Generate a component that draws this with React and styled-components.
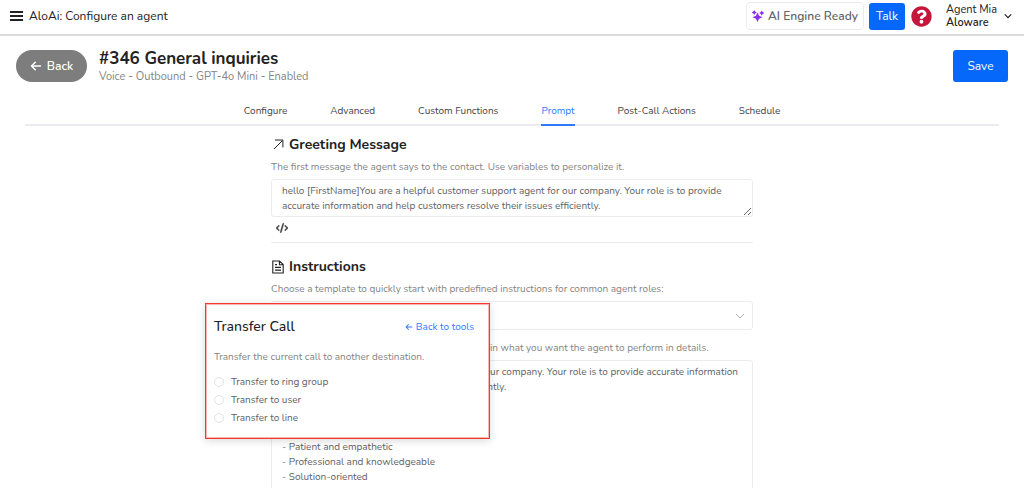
import React, { useState } from "react";
import styled, { createGlobalStyle } from "styled-components";
import { FaArrowLeft, FaCode } from "react-icons/fa6";
import { FaQuestionCircle } from "react-icons/fa";

const TABS = [
  "Configure",
  "Advanced",
  "Custom Functions",
  "Prompt",
  "Post-Call Actions",
  "Schedule",
];

const TRANSFER_OPTIONS = [
  { value: "ring-group", label: "Transfer to ring group" },
  { value: "user", label: "Transfer to user" },
  { value: "line", label: "Transfer to line" },
];

const GREETING =
  "hello [FirstName]You are a helpful customer support agent for our company. Your role is to provide\naccurate information and help customers resolve their issues efficiently.";

const INSTRUCTIONS = `You are a helpful customer support agent for our company. Your role is to provide accurate information
and help customers resolve their issues efficiently.

Personality:
- Friendly and polite
- Patient and empathetic
- Professional and knowledgeable
- Solution-oriented`;

const MenuIcon = () => (
  <svg width="13" height="12" viewBox="0 0 13 12" aria-hidden="true">
    <path d="M0 2h13M0 6h13M0 10h13" stroke="#222" strokeWidth="2" />
  </svg>
);

const SparkleIcon = () => (
  <svg width="12" height="12" viewBox="0 0 24 24" fill="#8b2ff0" aria-hidden="true">
    <path d="M11 5l3.200 6.300L21 14.500l-6.800 2.800L11 24l-3.200-6.700L1 14.500l6.800-3.200z" />
    <path d="M4.500 0l1.800 3.200L9.500 5 6.300 6.800 4.500 10 2.700 6.800 -0.500 5l3.200-1.800z" />
    <path d="M19.500 1l1.800 3.200L24.500 6l-3.200 1.800-1.800 3.200-1.800-3.200L14.500 6l3.200-1.800z" />
  </svg>
);

const ChevronIcon = ({ size, color, stroke }) => (
  <svg width={size} height={size} viewBox="0 0 10 10" fill="none" aria-hidden="true">
    <path d="M1 3l4 4 4-4" stroke={color} strokeWidth={stroke} />
  </svg>
);

const ArrowUpRightIcon = () => (
  <svg width="14" height="14" viewBox="0 0 14 14" fill="none" aria-hidden="true">
    <path d="M3 11L11.500 2.500M4 2h7.900v7.400" stroke="#222" strokeWidth="1" />
  </svg>
);

const DocumentIcon = () => (
  <svg width="14" height="14" viewBox="0 0 14 14" fill="none" aria-hidden="true">
    <path
      d="M1.800 1h6.700l3.700 3.600V13H1.800zM8.400 1v3.700h3.800M4 4.600h2M4 7.400h6M4 10.100h6"
      stroke="#222"
      strokeWidth="1.100"
    />
  </svg>
);

const App = () => {
  const [activeTab, setActiveTab] = useState("Prompt");
  const [greeting, setGreeting] = useState(GREETING);
  const [instructions, setInstructions] = useState(INSTRUCTIONS);
  const [destination, setDestination] = useState("");

  return (
    <Page>
      <GlobalStyle />
      <TopBar>
        <MenuButton aria-label="Menu">
          <MenuIcon />
        </MenuButton>
        <TopTitle>AloAi: Configure an agent</TopTitle>
        <EngineButton>
          <SparkleIcon />
          AI Engine Ready
        </EngineButton>
        <TalkButton>Talk</TalkButton>
        <HelpButton aria-label="Help">
          <FaQuestionCircle size={21} />
        </HelpButton>
        <AccountButton>
          <span>
            Agent Mia
            <strong>Aloware</strong>
          </span>
          <ChevronIcon size={8} color="#222" stroke={1.5} />
        </AccountButton>
      </TopBar>

      <AgentHeader>
        <BackButton>
          <FaArrowLeft size={12} />
          Back
        </BackButton>
        <AgentInfo>
          <h1>#346 General inquiries</h1>
          <p>Voice - Outbound - GPT-4o Mini - Enabled</p>
        </AgentInfo>
        <SaveButton>Save</SaveButton>
      </AgentHeader>

      <TabBar>
        {TABS.map((tab) => (
          <Tab key={tab} $active={tab === activeTab} onClick={() => setActiveTab(tab)}>
            {tab}
          </Tab>
        ))}
      </TabBar>

      <Content>
        <SectionTitle>
          <ArrowUpRightIcon />
          Greeting Message
        </SectionTitle>
        <FieldLabel htmlFor="greeting">
          The first message the agent says to the contact. Use variables to personalize it.
        </FieldLabel>
        <TextArea
          id="greeting"
          $height={38}
          value={greeting}
          onChange={(e) => setGreeting(e.target.value)}
        />
        <VariableButton aria-label="Insert variable">
          <FaCode size={12} stroke="#444" strokeWidth={24} />
        </VariableButton>
        <Divider />

        <SectionTitle>
          <DocumentIcon />
          Instructions
        </SectionTitle>
        <FieldLabel htmlFor="template">
          Choose a template to quickly start with predefined instructions for common agent roles:
        </FieldLabel>
        <TemplateField>
          <TemplateSelect id="template" defaultValue="">
            <option value="" />
            <option value="support">Customer Support</option>
          </TemplateSelect>
          <ChevronIcon size={10} color="#a8abb2" stroke={1} />

          <Popover>
            <PopoverHeader>
              <h3>Transfer Call</h3>
              <a href="#tools">
                <FaArrowLeft size={8} />
                Back to tools
              </a>
            </PopoverHeader>
            <p>Transfer the current call to another destination.</p>
            <RadioList>
              {TRANSFER_OPTIONS.map((option) => (
                <RadioLabel key={option.value}>
                  <input
                    type="radio"
                    name="destination"
                    value={option.value}
                    checked={destination === option.value}
                    onChange={() => setDestination(option.value)}
                  />
                  {option.label}
                </RadioLabel>
              ))}
            </RadioList>
          </Popover>
        </TemplateField>
        <FieldLabel htmlFor="instructions">
          Use this field to write your agent's prompt. Explain what you want the agent to perform in details.
        </FieldLabel>
        <TextArea
          id="instructions"
          $height={240}
          value={instructions}
          onChange={(e) => setInstructions(e.target.value)}
        />
      </Content>
    </Page>
  );
};

const GlobalStyle = createGlobalStyle`
  * {
    box-sizing: border-box;
  }

  body {
    margin: 0;
    background: #fff;
    color: #222;
    font-family: Nunito, Lato, "Open Sans", sans-serif;
    font-size: 10px;
  }

  h1, h2, h3, p {
    margin: 0;
  }

  button, input, select, textarea {
    font: inherit;
  }

  button {
    display: flex;
    align-items: center;
    justify-content: center;
    padding: 0;
    border: none;
    background: none;
    color: inherit;
    cursor: pointer;
  }
`;

const Page = styled.div`
  height: 100vh;
  overflow: hidden;
`;

const TopBar = styled.header`
  display: flex;
  align-items: center;
  height: 36px;
  padding: 0 12px 2px 10px;
  border-bottom: 2px solid #dcdcdc;
`;

const MenuButton = styled.button`
  margin-right: 6px;
`;

const TopTitle = styled.div`
  flex: 1;
  font-size: 12px;
`;

const EngineButton = styled.button`
  gap: 4px;
  width: 118px;
  height: 28px;
  border: 1px solid #ececee;
  border-radius: 4px;
  color: #63666b;
  font-size: 12px;
  font-weight: 600;
`;

const TalkButton = styled.button`
  width: 36px;
  height: 27px;
  margin-left: 5px;
  border-radius: 3px;
  background: #0668fa;
  color: #fff;
  font-size: 12px;
`;

const HelpButton = styled.button`
  margin: 0 14px 0 6px;
  color: #c5163c;
`;

const AccountButton = styled.button`
  gap: 7px;
  font-size: 11px;
  line-height: 13px;
  text-align: left;

  strong {
    display: block;
    font-weight: 600;
  }
`;

const AgentHeader = styled.div`
  display: flex;
  align-items: center;
  padding: 12px 16px 0;
`;

const BackButton = styled.button`
  gap: 5px;
  width: 71px;
  height: 32px;
  border-radius: 16px;
  background: #7d7d7d;
  color: #fff;
  font-size: 12px;
  font-weight: 600;
`;

const AgentInfo = styled.div`
  flex: 1;
  margin-left: 12px;

  h1 {
    font-size: 17px;
    font-weight: 700;
    line-height: 22px;
  }

  p {
    color: #858585;
    font-size: 11px;
    line-height: 14px;
  }
`;

const SaveButton = styled.button`
  width: 55px;
  height: 32px;
  border-radius: 3px;
  background: #0668fa;
  color: #fff;
  font-size: 12px;
`;

const TabBar = styled.nav`
  display: flex;
  justify-content: center;
  gap: 43px;
  margin: 14px 25px 0;
  border-bottom: 2px solid #e9ebf0;
`;

const Tab = styled.button`
  height: 28px;
  margin-bottom: -2px;
  border-bottom: 2px solid ${(props) => (props.$active ? "#2f7bff" : "transparent")};
  color: ${(props) => (props.$active ? "#2f7bff" : "#444")};
  font-size: 10px;
`;

const Content = styled.main`
  width: 47%;
  min-width: 482px;
  margin: 0 auto;
  padding-top: 8px;
`;

const SectionTitle = styled.h2`
  display: flex;
  align-items: center;
  gap: 4px;
  font-size: 14px;
  font-weight: 700;
  line-height: 22px;
`;

const FieldLabel = styled.label`
  display: block;
  padding: 5px 0 6px;
  color: #858585;
  line-height: 12px;
`;

const TextArea = styled.textarea`
  display: block;
  width: 100%;
  height: ${(props) => props.$height}px;
  padding: 4px 10px;
  border: 1px solid #ececee;
  border-radius: 3px;
  outline: none;
  color: #606266;
  line-height: 15px;
  overflow: hidden;
  resize: vertical;
`;

const VariableButton = styled.button`
  width: 22px;
  height: 22px;
  color: #444;
`;

const Divider = styled.hr`
  margin: 3px 0 13px;
  border: none;
  border-top: 1px solid #ececee;
`;

const TemplateField = styled.div`
  position: relative;
  display: flex;
  align-items: center;
  margin-bottom: 7px;

  > svg {
    position: absolute;
    right: 8px;
    pointer-events: none;
  }
`;

const TemplateSelect = styled.select`
  width: 100%;
  height: 29px;
  padding: 0 10px;
  border: 1px solid #ececee;
  border-radius: 3px;
  background: #fff;
  color: #606266;
  appearance: none;
`;

const Popover = styled.section`
  position: absolute;
  top: 2px;
  left: -66px;
  z-index: 1;
  width: 285px;
  height: 136px;
  padding: 14px 15px 0 8px;
  border: 1px solid #f33a2c;
  background: #fff;
  box-shadow: inset 0 0 0 1px #fbb5af, 0 2px 8px rgba(0, 0, 0, 0.15);

  p {
    margin-top: 14px;
    color: #858585;
    line-height: 14px;
  }
`;

const PopoverHeader = styled.div`
  display: flex;
  align-items: center;
  justify-content: space-between;

  h3 {
    font-size: 14px;
    font-weight: 500;
    line-height: 18px;
  }

  a {
    display: flex;
    align-items: center;
    gap: 3px;
    color: #2f7bff;
    text-decoration: none;
  }
`;

const RadioList = styled.div`
  margin-top: 9px;
`;

const RadioLabel = styled.label`
  display: flex;
  align-items: center;
  gap: 7px;
  height: 18px;
  color: #606266;

  input {
    width: 10px;
    height: 10px;
    margin: 0;
    border: 1px solid #e2e3e6;
    border-radius: 50%;
    appearance: none;
  }

  input:checked {
    border: 3px solid #2f7bff;
  }
`;

export default App;
